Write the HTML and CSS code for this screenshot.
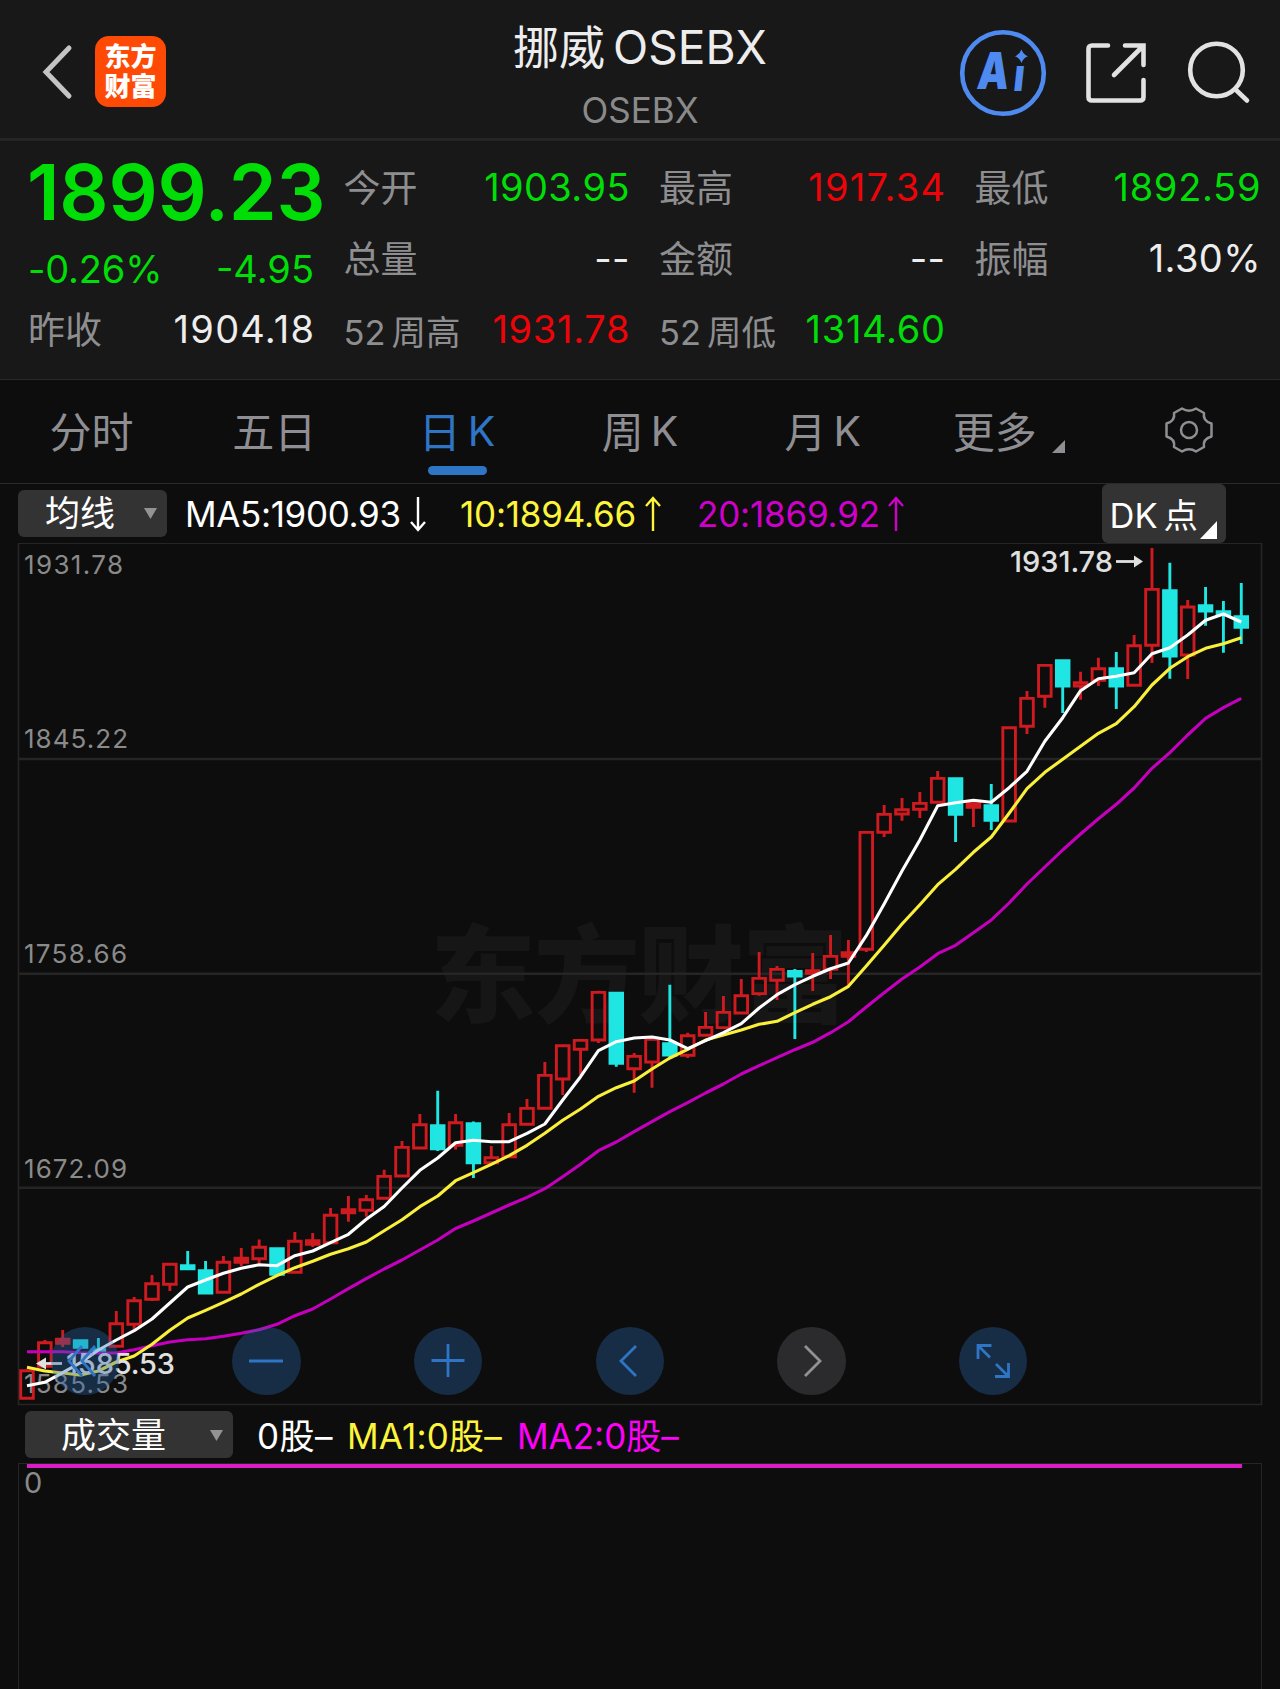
FILE: index.html
```html
<!DOCTYPE html>
<html lang="zh-CN">
<head>
<meta charset="utf-8">
<title>挪威OSEBX</title>
<link rel="stylesheet" href="styles.css">
</head>
<body>
<header class="header">
  <div class="header-left">
    <svg class="back" width="34" height="56" viewBox="0 0 34 56"><path d="M28 4 L5 28 L28 52"/></svg>
    <div class="logo"><span>东方</span><span>财富</span></div>
  </div>
  <div class="header-title">
    <h1>挪威<span class="thin-gap"></span>OSEBX</h1>
    <p>OSEBX</p>
  </div>
  <div class="header-actions">
    <svg width="88" height="88" viewBox="0 0 88 88">
      <circle cx="44" cy="44" r="40.8" class="ai-ring"/>
      <text transform="translate(17 60) skewX(-6) scale(.78 1)" class="ai-text">A<tspan class="ai-i" x="47" y="2">ı</tspan></text>
      <path d="M62.500 20.500 Q64.300 25.500 69 27.300 Q64.300 29 62.500 34 Q60.700 29 56 27.300 Q60.700 25.500 62.500 20.500Z" class="ai-star"/>
    </svg>
    <svg class="share" width="64" height="64" viewBox="0 0 64 64"><path d="M24 4.5 H8 Q4.5 4.5 4.5 8 V56 Q4.5 59.5 8 59.5 H56 Q59.5 59.5 59.5 56 V39 M41 4.5 H59.5 V24 M59 5 L30 34"/></svg>
    <svg class="search" width="64" height="66" viewBox="0 0 64 66"><circle cx="29.5" cy="31" r="26.3"/><path d="M48 50 L60 61.5"/></svg>
  </div>
</header>

<section class="quote">
  <div class="quote-main">
    <div class="price">1899.23</div>
    <div class="row change down"><span>-0.26%</span><span>-4.95</span></div>
    <div class="row prev"><span class="label">昨收</span><span class="value wider">1904.18</span></div>
  </div>
  <div class="quote-col">
    <div class="row"><span class="label">今开</span><span class="value down">1903.95</span></div>
    <div class="row"><span class="label">总量</span><span class="value">--</span></div>
    <div class="row"><span class="label small">52<i class="mini-gap"></i>周高</span><span class="value wide up">1931.78</span></div>
  </div>
  <div class="quote-col">
    <div class="row"><span class="label">最高</span><span class="value wider up">1917.34</span></div>
    <div class="row"><span class="label">金额</span><span class="value">--</span></div>
    <div class="row"><span class="label small">52<i class="mini-gap"></i>周低</span><span class="value wide down">1314.60</span></div>
  </div>
  <div class="quote-col">
    <div class="row"><span class="label">最低</span><span class="value wide down">1892.59</span></div>
    <div class="row"><span class="label">振幅</span><span class="value">1.30%</span></div>
  </div>
</section>

<nav class="tabs">
  <div class="tab">分时</div>
  <div class="tab">五日</div>
  <div class="tab active">日<i class="tab-gap"></i><b>K</b></div>
  <div class="tab">周<i class="tab-gap"></i><b>K</b></div>
  <div class="tab">月<i class="tab-gap"></i><b>K</b></div>
  <div class="tab more">更多<svg width="13" height="13" viewBox="0 0 13 13"><path d="M13 0V13H0Z"/></svg></div>
  <div class="tab"><svg class="gear" width="52" height="52" viewBox="-26 -26 52 52"><path d="M-7 -21.500Q0 -17 7 -21.500L15 -17Q13.500 -9 22.500 -6.500V6.500Q13.500 9 15 17L7 21.500Q0 17 -7 21.500L-15 17Q-13.500 9 -22.500 6.500V-6.500Q-13.500 -9 -15 -17Z"/><circle r="8"/></svg></div>
</nav>

<section class="ma-bar">
  <button class="picker ma-picker"><span>均线</span><svg width="13" height="11" viewBox="0 0 13 11"><path d="M0 0H13L6.5 11Z"/></svg></button>
  <span class="ma ma5">MA5:1900.93</span><svg class="arrow white" width="18" height="36" viewBox="0 0 18 36"><path d="M9 1V34M2 26L9 34L16 26"/></svg>
  <span class="ma ma10">10:1894.66</span><svg class="arrow yellow" width="18" height="36" viewBox="0 0 18 36"><path d="M9 35V2M2 10L9 2L16 10"/></svg>
  <span class="ma ma20">20:1869.92</span><svg class="arrow purple" width="18" height="36" viewBox="0 0 18 36"><path d="M9 35V2M2 10L9 2L16 10"/></svg>
  <button class="dk"><span>DK<i class="mini-gap"></i>点</span><svg width="17" height="18" viewBox="0 0 17 18"><path d="M17 0V18H0Z"/></svg></button>
</section>

<section class="chart">
  <svg id="kline" width="1280" height="863" viewBox="0 543 1280 863">
    <text x="430" y="1014" class="watermark" textLength="418">东方财富</text>
    <g class="grid">
      <path class="edge" d="M18.5 1405V543.2H1261.5V1405"/>
      <path d="M18 759H1262M18 973.700H1262M18 1187.800H1262"/>
      <path class="edge" d="M18 1404.500H1262"/>
    </g>
    <g class="axis">
      <text x="24" y="573.8" textLength="99">1931.78</text>
      <text x="24" y="747.8" textLength="104">1845.22</text>
      <text x="24" y="962.8" textLength="103">1758.66</text>
      <text x="24" y="1177.8" textLength="103">1672.09</text>
      <text x="24" y="1392.8" textLength="104">1585.53</text>
    </g>
    <g id="candles"></g>
    <g id="averages"></g>
    <g class="marks">
      <text x="1010" y="572" textLength="103">1931.78</text>
      <path d="M1116 561.5H1135"/><path class="head" d="M1134 555.5L1143 561.5L1134 567.5Z"/>
      <text x="66" y="1374" textLength="109">1585.53</text>
      <path d="M45 1363.5H62"/><path class="head" d="M46 1357.5L36 1363.5L46 1369.5Z"/>
    </g>
  </svg>
  <div class="controls">
    <button><svg width="68" height="68" viewBox="-34 -34 68 68"><path d="M-3 -15L-16 0L-3 15M10 -15L-3 0L10 15"/></svg></button>
    <button><svg width="68" height="68" viewBox="-34 -34 68 68"><path d="M-17 0H17"/></svg></button>
    <button><svg width="68" height="68" viewBox="-34 -34 68 68"><path d="M-16.5 -.5H16.5M0 -17V16"/></svg></button>
    <button><svg width="68" height="68" viewBox="-34 -34 68 68"><path d="M6 -15L-9 0L6 15"/></svg></button>
    <button class="disabled"><svg width="68" height="68" viewBox="-34 -34 68 68"><path d="M-6 -15L9 0L-6 15"/></svg></button>
    <button><svg width="68" height="68" viewBox="-34 -34 68 68"><path d="M-15 -2V-15.5H-1.5M-15 -15.5L-3 -3.5M3 3L15 15M2 15.5H15.5V2"/></svg></button>
  </div>
</section>

<section class="vol-bar">
  <button class="picker vol-picker"><span>成交量</span><svg width="13" height="11" viewBox="0 0 13 11"><path d="M0 0H13L6.5 11Z"/></svg></button>
  <span class="vol v0">0股–</span>
  <span class="vol v1">MA1:0股–</span>
  <span class="vol v2">MA2:0股–</span>
</section>
<section class="volume"><div class="vol-line"></div><span>0</span></section>
<script src="script.js"></script>
</body>
</html>
```
FILE: styles.css
```css
* { box-sizing: border-box; }
body {
  margin: 0;
  width: 1280px;
  height: 1689px;
  overflow: hidden;
  display: flex;
  flex-direction: column;
  background: #0d0d0d;
  color: #ededed;
  font-family: Inter, "Noto Sans CJK SC", sans-serif;
}
svg { display: block; flex: none; }
button { border: 0; padding: 0; margin: 0; font: inherit; color: inherit; }
.up { color: #ee0408; }
.down { color: #00dd07; }

.header {
  height: 141px;
  flex: none;
  display: grid;
  grid-template-columns: 400px 480px 400px;
  background: #181818;
  border-bottom: 3px solid #252525;
}
.header-left { display: flex; align-items: flex-start; padding: 36px 0 0 41px; }
.back { margin: 8px 20px 0 0; }
.back path { fill: none; stroke: #c4c4c4; stroke-width: 5; stroke-linecap: round; }
.logo {
  width: 71px;
  height: 71px;
  border-radius: 14px;
  background: #ff4a06;
  display: flex;
  flex-direction: column;
  align-items: center;
  padding-top: 6px;
  color: #fff;
  font-size: 26px;
  font-weight: 900;
  line-height: 29.5px;
}
.header-title { text-align: center; }
h1 { margin: 19px 0 0; font-size: 46px; font-weight: 400; line-height: 56px; }
.thin-gap { display: inline-block; width: 8px; }
.header-title p { margin: 13px 0 0; font-size: 35px; line-height: 44px; color: #8a8a8a; }
.header-actions { display: flex; align-items: flex-start; padding: 28.5px 0 0 79px; }
.ai-ring { fill: none; stroke: #4f8af0; stroke-width: 4.6; }
.ai-text { font: 900 51px Inter, sans-serif; fill: #4f8af0; }
.ai-i { font-size: 46px; }
.ai-star { fill: #4f8af0; }
.share { margin: 12px 0 0 36.5px; }
.search { margin: 10px 0 0 39px; }
.share path, .search path, .search circle { fill: none; stroke: #e2e2e2; stroke-width: 4.6; stroke-linecap: round; }

.quote {
  height: 239px;
  flex: none;
  display: grid;
  grid-template-columns: repeat(4, 286px);
  column-gap: 29.5px;
  padding: 10.5px 0 0 28px;
  background: #181818;
  border-bottom: 1px solid #2a2a2a;
  font-size: 38px;
}
.row { display: flex; justify-content: space-between; align-items: center; height: 71.3px; line-height: 71.3px; white-space: nowrap; }
.price { height: 81px; line-height: 81px; margin-left: -1px; font-size: 77px; font-weight: 600; letter-spacing: -.2px; color: #00dd07; white-space: nowrap; }
.row.change { height: 74px; }
.change span:first-child { letter-spacing: -.2px; }
.row.prev { height: 46px; }
.value { letter-spacing: .4px; margin-right: -.4px; }
.wide { letter-spacing: .7px; margin-right: -.7px; }
.wider { letter-spacing: 1.25px; margin-right: -1.25px; }
.label { color: #8e8e90; font-size: 37px; padding-top: 2px; }
.label.small { font-size: 34.5px; padding-top: 5px; }
.mini-gap { display: inline-block; width: 6px; }

.tabs {
  height: 104px;
  flex: none;
  display: grid;
  grid-template-columns: repeat(7, 1fr);
  border-bottom: 1px solid #2a2a2a;
}
.tab { position: relative; display: flex; justify-content: center; align-items: center; padding-bottom: 4px; font-size: 42px; color: #8e8e93; }
.tab b { font-weight: 400; font-size: 41px; padding-top: 2px; }
.tab-gap { width: 7px; }
.active { color: #2f75c6; }
.active::after { content: ""; position: absolute; bottom: 8px; width: 59px; height: 9px; border-radius: 4.5px; background: #2f75c6; }
.more { padding-left: 6px; }
.more svg { margin: 34px 0 0 15px; fill: #8e8e93; }
.gear { margin-top: 1px; fill: none; stroke: #8e8e93; stroke-width: 2.5; stroke-linejoin: round; }

.ma-bar { height: 59px; flex: none; display: flex; align-items: center; padding: 0 54px 0 18px; font-size: 35px; white-space: nowrap; }
.picker { height: 47.5px; border-radius: 6px; background: #333; display: flex; align-items: center; justify-content: space-between; font-size: 35px; line-height: 47px; color: #fff; }
.picker svg { fill: #939393; }
.ma-picker { width: 149px; padding: 0 10px 0 27px; margin-right: 18px; }
.ma5 { width: 224px; letter-spacing: -.35px; color: #fff; }
.ma10 { width: 184px; letter-spacing: -.2px; color: #fdf53c; margin-left: 33px; }
.ma20 { width: 190px; letter-spacing: -.2px; color: #cf00c9; margin-left: 35px; }
.arrow { fill: none; stroke-width: 2.4; }
.white { stroke: #fff; }
.yellow { stroke: #fdf53c; }
.purple { stroke: #cf00c9; }
.dk { width: 124.5px; height: 59px; margin-left: auto; border-radius: 6px; background: #333; display: flex; align-items: center; padding: 0 0 2px 8px; color: #fff; font-size: 34.5px; }
.dk svg { fill: #fff; margin: 34px 0 0 2px; }

.chart { position: relative; height: 863px; flex: none; }
.grid path { fill: none; stroke: #252525; stroke-width: 2.4; }
.grid .edge { stroke-width: 1.6; }
.watermark { font: 900 106px "Noto Sans CJK SC", sans-serif; fill: #161616; }
.axis text { font: 400 26px Inter, sans-serif; fill: #8a8a8a; }
.marks text { font: 500 29px Inter, sans-serif; fill: #e0e0e0; }
.marks path { stroke: #e0e0e0; stroke-width: 2.8; }
.marks .head { fill: #e0e0e0; stroke: none; }
.rise { fill: none; stroke: #cf1b20; stroke-width: 2.9; }
.fall { fill: #1fe5e3; stroke: #1fe5e3; stroke-width: 2.9; }
.avg { fill: none; stroke-width: 3.1; stroke-linejoin: round; }
.avg5 { stroke: #fff; }
.avg10 { stroke: #faf03c; }
.avg20 { stroke: #c400be; }
.controls { position: absolute; left: 50.5px; top: 783.5px; display: flex; gap: 113.2px; }
.controls button { width: 68.5px; height: 68.5px; border-radius: 50%; background: rgba(42, 100, 170, .36); }
.controls path { fill: none; stroke: #2f75c6; stroke-width: 2.8; }
.controls .disabled { background: #2b2b2d; }
.controls .disabled path { stroke: #929292; }

.vol-bar { height: 57px; flex: none; display: flex; align-items: center; padding: 0 0 0 25px; font-size: 35px; white-space: nowrap; }
.vol-picker { width: 208px; padding: 1px 10px 0 36px; }
.vol { padding-bottom: 3px; }
.v0 { margin-left: 24px; width: 90px; letter-spacing: .5px; color: #fff; }
.v1 { width: 170px; letter-spacing: .2px; color: #fdf53c; }
.v2 { color: #ff00fa; }
.volume { flex: 1; width: 1244px; margin-left: 18px; border: 1.5px solid #252525; border-bottom: 0; }
.vol-line { height: 4px; margin: 0 19px 0 8px; background: #dc1cc4; }
.volume span { display: block; margin: 0 0 0 5px; font-size: 29px; line-height: 29px; color: #8a8a8a; }
```
FILE: script.js
```js
// [body top, body bottom, wick top, wick bottom, falling, solid]
const candles = [
  [1370,1399,1370,1399],[1342,1367,1340,1367],[1338.5,1344,1330,1347,0,1],[1340,1348,1340,1348,1],
  [1349,1352,1338,1352,1],[1323,1347,1311,1347],[1300,1325,1297,1329],[1283,1300,1275,1301],
  [1263.5,1285,1263,1291],[1265,1269.5,1251,1269.5,1],[1270,1293.7,1261,1293.7,1],[1261.5,1293,1256,1293],
  [1257.5,1263,1248,1266,0,1],[1246.5,1259.5,1239.5,1263.5],[1248,1275,1248,1275,1],[1240.5,1273,1232,1273],
  [1240,1245,1233,1247,0,1],[1214.5,1243.5,1208,1243],[1209,1213.5,1196,1221.7,0,1],[1199,1211,1195,1216.7],
  [1175.7,1199,1169.7,1199],[1146.7,1176.7,1141,1176],[1124,1148.7,1114,1148],[1125,1149.5,1090.7,1151,1],
  [1122,1146,1114,1149.5],[1123,1163.5,1121.5,1178,1],[1157,1163.5,1146,1163],[1124,1157.5,1113,1157],
  [1107.7,1125,1099,1125],[1074.7,1109,1062,1109],[1045,1079.7,1045,1095],[1039.7,1050,1039,1075],
  [991.7,1040.7,990.7,1043],[992.5,1064,992.5,1066.7,1],[1055.7,1069.5,1053,1092.7],[1038.7,1062.7,1038,1087.7],
  [1043,1055.7,984.7,1057.7,1],[1035,1056,1032.7,1058],[1026.7,1036,1012,1036],[1011.7,1028.3,996,1028],
  [995,1013.7,979,1013],[977.7,994.3,952,995.7],[968.7,981,966,1000],[970.7,976.7,969,1039,1],
  [970,974,953,991,0,1],[955.7,970,935,979],[952,957,940,985,0,1],[831.7,950,831,952],
  [813.7,833,805,837],[809,814.7,798,820.7],[802.7,810,792,818],[777.7,803,771,803],
  [778,815,778,842,1],[802,808,802,827,0,1],[805,821,784,830,1],[727,821.7,727,821],
  [697.7,727,691,734],[664.7,697,664,707.7],[660,686.7,660,713,1],[682,686.7,671.7,699.7],
  [668,681,657.7,686],[668,686.7,652,709,1],[645,686,635,686],[588.7,646,548,663],
  [590,656.7,562.7,678.7,1],[606.3,655.7,600,679],[605,611.7,587,625.7,1],[611,615,601,652.7,1],
  [616,628,583,644,1]
];
const averages = {
  avg20: [1351.7,1351.7,1351.7,1352.7,1353,1353,1349.7,1345.7,1342,1339.7,1338.7,1336.3,1333.3,1329.7,1324.3,1315.7,1309,1299,1288.7,1278.7,1269,1260,1250,1240,1228.5,1221,1213,1205,1197.3,1188.7,1176.7,1164.3,1150.7,1142,1131.7,1121.7,1111.7,1102.7,1093,1084,1074,1065.7,1057.7,1049.7,1042.3,1032.7,1021.7,1007,992.7,979,967,953.7,945.3,932.7,920,903,884,867,850,834,818.7,804.3,788,768.3,752.7,735,718.3,707.7,698.3],
  avg10: [1367.3,1371,1373,1375,1371,1362,1356,1344.3,1330.3,1318,1310.3,1302.3,1294,1284.3,1275.7,1267.7,1261.3,1254.3,1248.7,1242,1230.7,1219.7,1206.7,1196,1180.7,1172.7,1164.3,1155.7,1145.3,1133.3,1120.3,1109,1096.3,1087.7,1081,1069,1058,1049.3,1040,1035,1030,1024.3,1021.3,1012.7,1004.3,996.7,986.3,966,945.3,924,904.7,884.7,869.3,852.3,837,813.3,788.7,772.3,759.3,746.3,733.3,723.7,706.7,685,668.3,656.7,648.3,643.7,637.7],
  avg5: [1385.7,1382.3,1372.7,1362.7,1350,1340,1330.7,1319,1303,1287,1280,1273.3,1268.3,1264.7,1265.7,1255.7,1251,1242.7,1234.3,1219.3,1206.5,1188,1170.3,1158,1142.7,1140.3,1141.7,1141.7,1133.3,1124,1100,1076.7,1050.7,1041.7,1038,1037,1040,1048.7,1040.7,1032.7,1023.7,1008,994.7,984.7,976.3,968.7,963,935.7,904,871,840,805.7,802.7,800.3,802.3,787.7,771.3,741.3,717.7,690.7,678.7,676.3,672.7,653.7,647.7,635,620.3,614,622]
};
const x = i => 27 + i * 17.857;

document.getElementById("candles").innerHTML = candles.map(([top, bottom, high, low, falling, solid], i) => {
  const c = x(i), t = top + 0.7, b = Math.max(bottom - 0.7, t + 1);
  const style = solid ? ' style="fill:#cf1b20"' : "";
  const box = `M${c - 6.3} ${t}H${c + 6.3}V${b}H${c - 6.3}Z`;
  return `<path class="${falling ? "fall" : "rise"}"${style} d="${box}M${c} ${high}V${t}M${c} ${b}V${low}"/>`;
}).join("");

document.getElementById("averages").innerHTML = Object.entries(averages).map(([name, ys]) =>
  `<polyline class="avg ${name}" points="${ys.map((y, i) => x(i) + "," + y).join(" ")}"/>`).join("");
```
